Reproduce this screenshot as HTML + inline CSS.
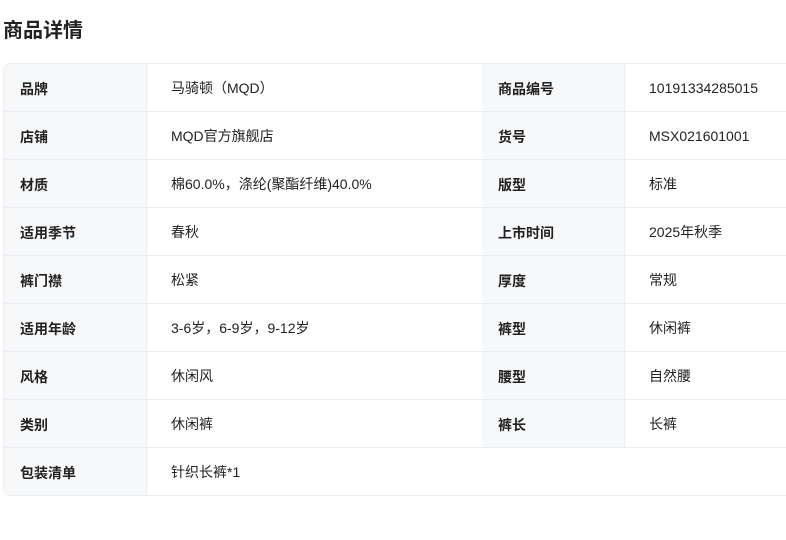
<!DOCTYPE html>
<html><head><meta charset="utf-8"><style>
body{margin:0;width:786px;height:540px;overflow:hidden;background:#fff;font-family:"Liberation Sans","Noto Sans CJK SC",sans-serif;color:#222;}
h1{position:absolute;left:3px;top:17px;margin:0;font-size:20px;font-weight:bold;line-height:28px;}
.t{position:absolute;left:3px;top:63px;width:820px;border:1px solid #ebedf0;border-radius:8px;overflow:hidden;}
.r{display:flex;height:47px;border-bottom:1px solid #ebedf0;}
.r:last-child{border-bottom:none;}
.l{background:#f7f8fa;font-weight:bold;font-size:14px;line-height:50px;box-sizing:border-box;border-right:1px solid #ebedf0;}
.v{font-size:14px;line-height:49px;box-sizing:border-box;}
.l1{width:143px;padding-left:16px}
.v1{width:335px;padding-left:24px}
.l2{width:143px;padding-left:16px;border-left:none}
.v2{flex:1;padding-left:24px}
</style></head><body>
<h1>商品详情</h1>
<div class="t">
<div class="r"><div class="l l1">品牌</div><div class="v v1">马骑顿（MQD）</div><div class="l l2">商品编号</div><div class="v v2">10191334285015</div></div>
<div class="r"><div class="l l1">店铺</div><div class="v v1">MQD官方旗舰店</div><div class="l l2">货号</div><div class="v v2">MSX021601001</div></div>
<div class="r"><div class="l l1">材质</div><div class="v v1">棉60.0%，涤纶(聚酯纤维)40.0%</div><div class="l l2">版型</div><div class="v v2">标准</div></div>
<div class="r"><div class="l l1">适用季节</div><div class="v v1">春秋</div><div class="l l2">上市时间</div><div class="v v2">2025年秋季</div></div>
<div class="r"><div class="l l1">裤门襟</div><div class="v v1">松紧</div><div class="l l2">厚度</div><div class="v v2">常规</div></div>
<div class="r"><div class="l l1">适用年龄</div><div class="v v1">3-6岁，6-9岁，9-12岁</div><div class="l l2">裤型</div><div class="v v2">休闲裤</div></div>
<div class="r"><div class="l l1">风格</div><div class="v v1">休闲风</div><div class="l l2">腰型</div><div class="v v2">自然腰</div></div>
<div class="r"><div class="l l1">类别</div><div class="v v1">休闲裤</div><div class="l l2">裤长</div><div class="v v2">长裤</div></div>
<div class="r"><div class="l l1">包装清单</div><div class="v v1" style="flex:1">针织长裤*1</div></div>
</div>
</body></html>
